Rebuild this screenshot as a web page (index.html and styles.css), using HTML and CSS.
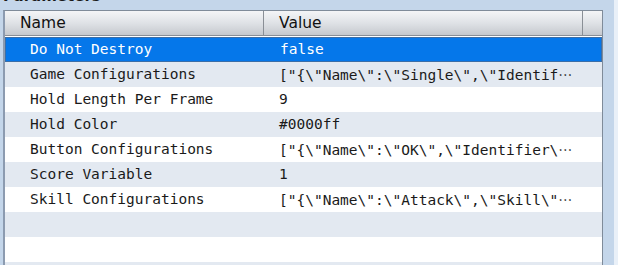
FILE: index.html
```html
<!DOCTYPE html>
<html>
<head>
<meta charset="utf-8">
<link rel="stylesheet" href="styles.css">
</head>
<body>
<div class="page">
  <div class="panel">
    <div class="title">Parameters</div>
    <div class="table">
      <div class="head">
        <div class="hcell hname">Name</div>
        <div class="hcell hvalue">Value</div>
        <div class="hcell hfill"></div>
      </div>
      <div class="rows">
        <div class="row sel"><span class="n">Do Not Destroy</span><span class="v">false</span></div>
        <div class="row alt"><span class="n">Game Configurations</span><span class="v">["{\"Name\":\"Single\",\"Identif<span class="ell" lang="ja">⋯</span></span></div>
        <div class="row"><span class="n">Hold Length Per Frame</span><span class="v">9</span></div>
        <div class="row alt"><span class="n">Hold Color</span><span class="v">#0000ff</span></div>
        <div class="row"><span class="n">Button Configurations</span><span class="v">["{\"Name\":\"OK\",\"Identifier\<span class="ell" lang="ja">⋯</span></span></div>
        <div class="row alt"><span class="n">Score Variable</span><span class="v">1</span></div>
        <div class="row"><span class="n">Skill Configurations</span><span class="v">["{\"Name\":\"Attack\",\"Skill\"<span class="ell" lang="ja">⋯</span></span></div>
        <div class="row alt"></div>
        <div class="row"></div>
        <div class="row alt"></div>
      </div>
    </div>
  </div>
  <div class="stripe"></div>
</div>
</body>
</html>
```
FILE: styles.css
```css
html, body {
  margin: 0;
  padding: 0;
  background: #c4d6ea;
  overflow: hidden;
}
.page {
  display: flex;
  width: 618px;
  height: 265px;
  overflow: hidden;
}
.panel {
  padding-left: 3px;
  width: 600px;
}
.title {
  font-family: "DejaVu Sans", sans-serif;
  font-weight: bold;
  font-size: 15px;
  line-height: 16px;
  margin-top: -12px;
  height: 16px;
  color: #1a1a1a;
}
.table {
  margin-top: 6px;
  border-top: 1px solid #7f8b99;
  border-left: 2px solid #8c9bb0;
  border-right: 1px solid #7f8b99;
  width: 597px;
  background: #ffffff;
}
.head {
  display: flex;
  height: 24px;
  border-bottom: 1px solid #8a8f96;
  background: linear-gradient(#f4f5f7, #dfe2e6 50%, #c6c9ce);
  font-family: "DejaVu Sans", sans-serif;
  font-size: 15.5px;
  color: #111;
}
.hcell {
  line-height: 24px;
  box-sizing: border-box;
}
.hname {
  width: 259px;
  padding-left: 15px;
  border-right: 1px solid #8a8f96;
}
.hvalue {
  width: 319px;
  padding-left: 15px;
  border-right: 1px solid #8a8f96;
}
.hfill {
  flex: 1;
}
.rows {
  padding-top: 1px;
  background: #ffffff;
}
.row {
  display: flex;
  height: 25px;
  box-sizing: border-box;
  font-family: "DejaVu Sans Mono", monospace;
  font-size: 14.5px;
  line-height: 25px;
  color: #1a1a1a;
  white-space: nowrap;
}
.row.alt {
  background: #e3e9f1;
}
.row.sel {
  background: #0577ea;
  border: 1px solid #3a6ea8;
  color: #ffffff;
  line-height: 23px;
}
.n {
  width: 258px;
  padding-left: 25px;
  box-sizing: border-box;
}
.sel .n {
  padding-left: 24px;
}
.v {
  padding-left: 16px;
}
.ell {
  font-family: "Noto Sans CJK JP", sans-serif;
  font-size: 14px;
}
.stripe {
  margin-left: auto;
  width: 4px;
  background: #e9f0f8;
}
```
